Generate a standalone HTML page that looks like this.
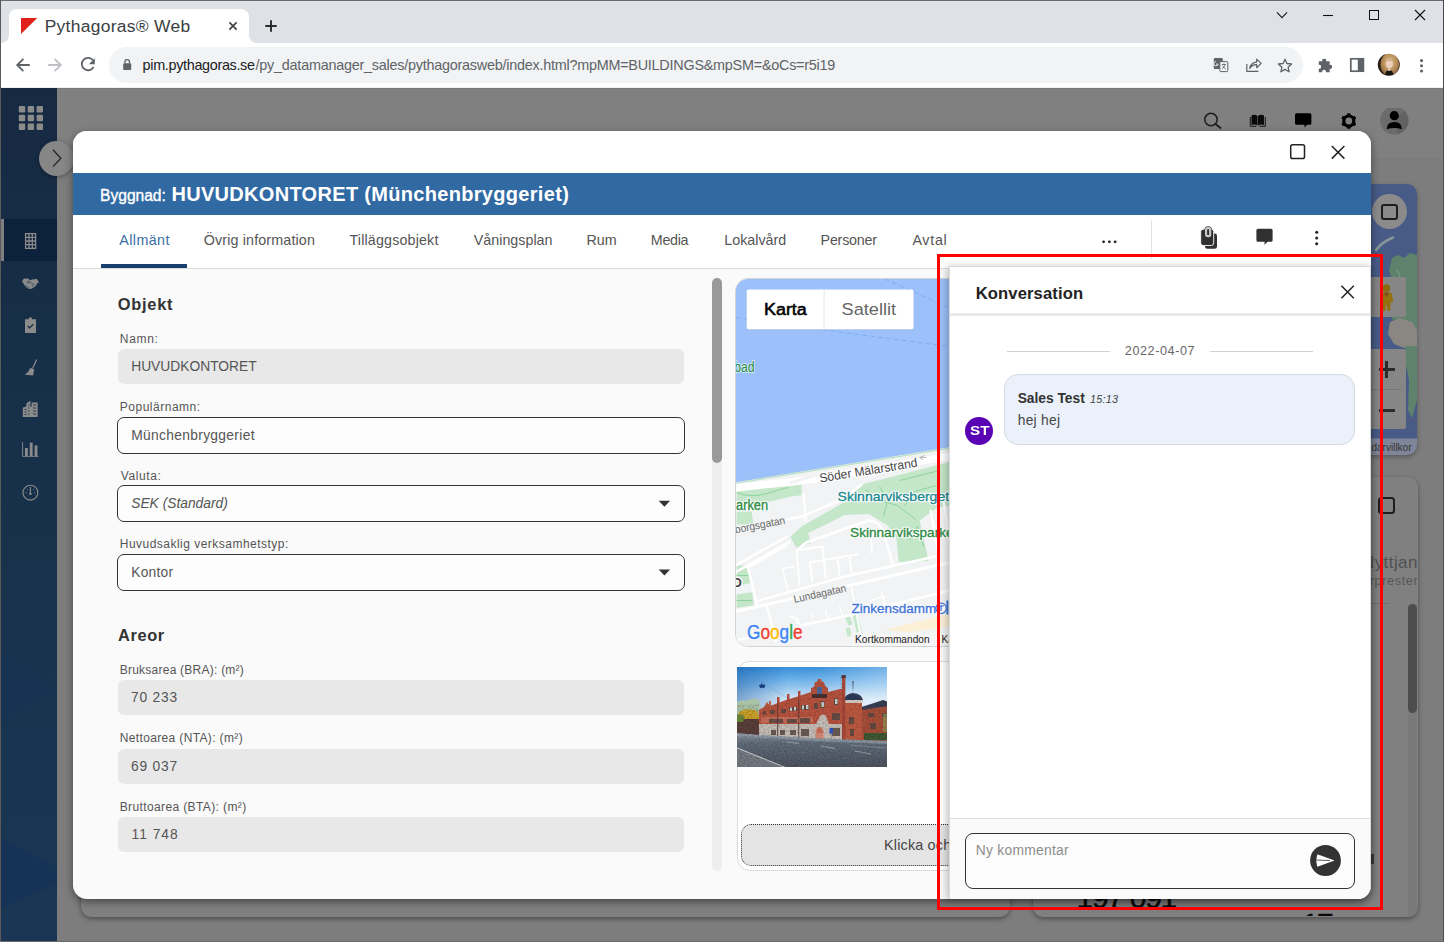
<!DOCTYPE html>
<html><head><meta charset="utf-8"><title>Pythagoras Web</title>
<style>
*{box-sizing:border-box;margin:0;padding:0}
html,body{width:1444px;height:942px;overflow:hidden;background:#7d7d7d;font-family:"Liberation Sans",sans-serif;}
#root{position:absolute;left:0;top:0;width:1444px;height:942px;overflow:hidden;background:#7d7d7d}
#root div,#root svg,#root span.t{position:absolute}
span.t{white-space:nowrap;display:block}
.gf{background:#e8e8e8;border-radius:6px;left:118px;width:566px}
.of{background:#fdfdfd;border:1px solid #333;border-radius:7px;left:117px;width:568px}
</style>

</head><body><div id="root">
<!-- behind layer -->
<div style="left:1px;top:88px;width:1442px;height:70px;background:#808080"></div>
<!-- header icons -->
<svg style="left:1200px;top:108px" width="230" height="28" viewBox="1200 108 230 28">
 <circle cx="1211" cy="119.5" r="6.2" fill="none" stroke="#1c1c1c" stroke-width="1.5"/>
 <path d="M1215.5 124 L1220.5 128" stroke="#1c1c1c" stroke-width="1.8" stroke-linecap="round"/>
 <!-- book -->
 <path d="M1251.5 115.5 q3.5 -1.5 6 0.5 v9.5 q-2.5 -1.8 -6 -0.6z M1264 115.5 q-3.500 -1.5 -6 0.5 v9.5 q2.500 -1.8 6 -0.6z" fill="#0a0a0a"/>
 <path d="M1250.3 117 v9.300 h6 M1265.300 117 v9.300 h-6" fill="none" stroke="#0a0a0a" stroke-width="0.9"/>
 <!-- chat -->
 <path d="M1296.500 113.200 h13.400 q1.500 0 1.500 1.500 v8.600 q0 1.500 -1.500 1.500 h-2.900 l-2.300 2.800 l-0.300 -2.800 h-7.900 q-1.500 0 -1.500 -1.500 v-8.600 q0 -1.500 1.500 -1.500z" fill="#000"/>
 <!-- gear -->
 <g transform="translate(1348.800 121)">
  <circle r="5" fill="none" stroke="#000" stroke-width="3.200"/>
  <g fill="#000">
   <rect x="-1.700" y="-7.800" width="3.400" height="3.200" rx="0.800"/>
   <rect x="-1.700" y="4.600" width="3.400" height="3.200" rx="0.800"/>
   <rect x="-1.700" y="-7.800" width="3.400" height="3.200" rx="0.800" transform="rotate(60)"/>
   <rect x="-1.700" y="4.600" width="3.400" height="3.200" rx="0.800" transform="rotate(60)"/>
   <rect x="-1.700" y="-7.800" width="3.400" height="3.200" rx="0.800" transform="rotate(120)"/>
   <rect x="-1.700" y="4.600" width="3.400" height="3.200" rx="0.800" transform="rotate(120)"/>
  </g>
 </g>
 <!-- avatar -->
 <circle cx="1394.300" cy="120.500" r="14.200" fill="#6c6c6c"/>
 <path d="M1394.300 120.500 L1404.500 110.700 A14.200 14.200 0 0 1 1398 134.200 Z" fill="#626262"/>
 <circle cx="1394.300" cy="115.700" r="4.600" fill="#000"/>
 <path d="M1386.800 129.200 q0 -7.200 7.500 -7.200 q7.500 0 7.500 7.200 q-7.500 -2.200 -15 0z" fill="#000"/>
</svg>
<!-- right map card -->
<div style="left:1300px;top:184px;width:117px;height:271px;border-radius:10px;background:#485b87;overflow:hidden;box-shadow:0 2px 5px rgba(0,0,0,.3)">
 <svg style="left:0;top:0" width="117" height="271" viewBox="1300 184 117 271">
  <path d="M1376 250 Q1382 242 1393 237.500" stroke="#87969a" stroke-width="2.600" fill="none" stroke-linecap="round"/>
  <path d="M1392 258 L1398 255 L1404 258 L1410 253 L1417 255 V346 H1406 L1400 330 L1392 318 L1390 300 L1394 285 L1389 270z" fill="#5e826b"/>
  <path d="M1390 322 L1400 318 L1412 322 L1417 330 V346 L1404 348 L1394 344 L1388 334z" fill="#8a8782"/>
  <path d="M1406 346 H1417 V400 L1412 418 L1408 410 L1409 380 L1405 360z" fill="#5e826b"/>
  <path d="M1396 270 q5 4 3 10 q6 2 4 8" stroke="#7c9486" stroke-width="1.200" fill="none"/>
  <path d="M1371 438.500 h46 v17 h-46z" fill="#80869a"/>
  <path d="M1392 420.500 h25" stroke="#7a4a6a" stroke-width="0.800" stroke-dasharray="3 2"/>
 </svg>
</div>
<div style="left:1371.500px;top:193.500px;width:35.500px;height:35.500px;border-radius:50%;background:#8b8b8b"></div>
<div style="left:1381px;top:203.500px;width:16.500px;height:16px;border:2px solid #1e1e1e;border-radius:3px"></div>
<div style="left:1360px;top:277.400px;width:46.300px;height:39.300px;background:#868686;border-radius:2px"></div>
<svg style="left:1377.300px;top:280.500px" width="18.800" height="33" viewBox="0 0 22 34"><circle cx="11" cy="6" r="4.500" fill="#8a6a10"/><path d="M4.500 12 q6.500 -3 13 0 l1.500 10 l-3 0.500 l-0.500 10 h-3.500 l-0.500 -7 h-1 l-0.500 7 h-3.500 l-0.500 -10 l-3 -0.500z" fill="#93710f"/><path d="M8 11.500 l3 5 l3 -5z" fill="#7a4a20"/></svg>
<div style="left:1360px;top:349.300px;width:46.300px;height:80px;background:#868686;border-radius:2px"></div>
<div style="left:1371px;top:389px;width:30px;height:1px;background:#767676"></div>
<div style="left:1378.500px;top:367.500px;width:16px;height:3.500px;background:#2c2c2c"></div>
<div style="left:1384.800px;top:361px;width:3.500px;height:16.500px;background:#2c2c2c"></div>
<div style="left:1378.500px;top:408.500px;width:16px;height:3.500px;background:#2c2c2c"></div>
<!-- bottom cards -->
<div style="left:81px;top:600px;width:929px;height:316.500px;border-radius:11px;background:#808080;box-shadow:0 2px 5px rgba(0,0,0,.38)"></div>
<div style="left:1033px;top:477px;width:384.500px;height:439.500px;border-radius:10px;background:#808080;box-shadow:0 2px 5px rgba(0,0,0,.38)"></div>
<div style="left:1368px;top:853.500px;width:6px;height:10.300px;background:#3a3a3a;border-radius:1px"></div>
<div style="left:1377.500px;top:496.500px;width:17px;height:17px;border:2px solid #1e1e1e;border-radius:3.500px"></div>
<div style="left:1371px;top:603px;width:18px;height:1px;background:#6e6e6e"></div>
<div style="left:1407.500px;top:604px;width:9.500px;height:312px;background:#797979;border-radius:5px 5px 10px 5px"></div>
<div style="left:1407.500px;top:604px;width:9.500px;height:109px;border-radius:5px;background:#4d4d4d"></div>

<div style="left:0;top:0;width:1417px;height:916px;overflow:hidden"><span class="t" style="left:1362.00px;top:551.00px;line-height:24px;font-size:17px;font-weight:normal;font-style:normal;letter-spacing:0.417px;color:#505050;">Nyttjanderätt</span>
<span class="t" style="left:1362.00px;top:572.00px;line-height:18px;font-size:12.6px;font-weight:normal;font-style:normal;letter-spacing:0.667px;color:#575757;">erprestera</span>
<span class="t" style="left:1371.50px;top:441.00px;line-height:14px;font-size:10px;font-weight:normal;font-style:normal;letter-spacing:0.000px;color:#333;">darvillkor</span>
<span class="t" style="left:1076.60px;top:877.00px;line-height:42px;font-size:30px;font-weight:normal;font-style:normal;letter-spacing:-1.300px;color:#0a0a0a;-webkit-text-stroke:0.5px #0a0a0a;">197 091</span>
<span class="t" style="left:1302.00px;top:903.00px;line-height:42px;font-size:30px;font-weight:normal;font-style:normal;letter-spacing:-1.800px;color:#0a0a0a;-webkit-text-stroke:0.5px #0a0a0a;">17</span></div>
<!-- sidebar -->
<div style="left:1px;top:88px;width:56px;height:854px;background:linear-gradient(180deg,#162a42 0%,#18324c 55%,#1a3654 100%)"></div>
<svg style="left:1px;top:600px" width="56" height="342" viewBox="1 600 56 342"><path d="M1 838 L57 868 L57 884 L1 908z" fill="#12305a" opacity="0.450"/><path d="M1 650 L57 690 L1 720z" fill="#12305a" opacity="0.250"/></svg>
<div style="left:1px;top:219px;width:56px;height:42px;background:#0c213c"></div>
<div style="left:1px;top:219px;width:3px;height:42px;background:#7f7f7f"></div>
<svg style="left:1px;top:88px" width="56" height="440" viewBox="1 88 56 440">
 <g fill="#8b8b8b">
  <rect x="18.800" y="106" width="6.400" height="6.400" rx="1.200"/><rect x="27.700" y="106" width="6.400" height="6.400" rx="1.200"/><rect x="36.600" y="106" width="6.400" height="6.400" rx="1.200"/>
  <rect x="18.800" y="114.800" width="6.400" height="6.400" rx="1.200"/><rect x="27.700" y="114.800" width="6.400" height="6.400" rx="1.200"/><rect x="36.600" y="114.800" width="6.400" height="6.400" rx="1.200"/>
  <rect x="18.800" y="123.600" width="6.400" height="6.400" rx="1.200"/><rect x="27.700" y="123.600" width="6.400" height="6.400" rx="1.200"/><rect x="36.600" y="123.600" width="6.400" height="6.400" rx="1.200"/>
 </g>
 <!-- building grid icon -->
 <g fill="none" stroke="#8b8b8b" stroke-width="1.300">
  <rect x="25.600" y="233.600" width="10" height="14.800"/>
  <path d="M29 233.600 v14.800 M32.300 233.600 v14.800 M25.600 237.300 h10 M25.600 241 h10 M25.600 244.700 h10"/>
 </g>
 <!-- handshake -->
 <path d="M22 281.600 L24.200 278 L25.600 279 L27.400 278.200 L29.200 279.600 L30.500 280.300 L32.500 279.200 L33.600 279.500 L36.200 278.800 L37.200 279.600 L39 282.400 L37.300 283.100 L36.400 285 L35 286.800 L32 288.600 L29.800 289 L27.500 288.200 L25 286 L23.600 283.600 L22.800 282.400z" fill="#8b8b8b"/>
 <path d="M29.600 281 q-2.200 -0.200 -2.400 1.400 q0.400 1.400 2 0.600 l1.600 -0.800 l4 3.400 M25.500 285 l3.500 3 M33.500 286.800 l-2 -1.600" stroke="#152a47" stroke-width="0.700" fill="none" opacity="0.850"/>
 <!-- clipboard -->
 <path d="M25 319.200 h3.400 q0.400 -2 2 -2 q1.600 0 2 2 h3.600 v13.800 h-11z" fill="#8b8b8b"/>
 <path d="M27.700 326 l1.900 1.900 l3.600 -3.700" stroke="#152a47" stroke-width="1.300" fill="none"/>
 <!-- broom -->
 <path d="M36.700 359.500 l-4.200 9" stroke="#8b8b8b" stroke-width="1.200"/>
 <path d="M30.300 367.800 l4 1.800 l-1.200 5.800 l-8.300 -0.600 q4 -2.400 5.500 -7z" fill="#8b8b8b"/>
 <!-- city -->
 <path d="M22.800 417 v-9.600 l3.600 -1 v-3.200 l4 -2.400 v6 h1.200 v-4.400 h6 v14.600z" fill="#8b8b8b"/>
 <path d="M24.500 409.500 h2 M24.500 412 h2 M24.500 414.500 h2 M28 405 h1.500 M28 408 h1.500 M28 411 h1.500 M28 414 h1.500 M33 405 h3 M33 408 h3 M33 411 h3 M33 414 h3" stroke="#152a47" stroke-width="0.800"/>
 <!-- bar chart -->
 <path d="M22.600 442 v14.400 h16" stroke="#8b8b8b" stroke-width="0.900" fill="none"/>
 <rect x="25" y="448" width="2.800" height="8" fill="#8b8b8b"/><rect x="29.800" y="442.600" width="2.800" height="13.400" fill="#8b8b8b"/><rect x="34.600" y="445.400" width="2.800" height="10.600" fill="#8b8b8b"/>
 <!-- gauge -->
 <circle cx="30.400" cy="492.700" r="7.400" fill="none" stroke="#8b8b8b" stroke-width="1.100"/>
 <path d="M30.400 487 v5.500" stroke="#8b8b8b" stroke-width="1.200"/><circle cx="30.400" cy="493.800" r="1.300" fill="#8b8b8b"/>
 <path d="M25.500 492.700 h1.200 M34.100 492.700 h1.200 M26.900 489 l0.900 0.900 M33.900 489 l-0.900 0.900" stroke="#8b8b8b" stroke-width="0.800"/>
</svg>
<!-- chevron circle -->
<div style="left:39.300px;top:140.800px;width:35px;height:35px;border-radius:50%;background:#868686;box-shadow:0 1px 4px rgba(0,0,0,.35)"></div>
<svg style="left:50px;top:147px" width="14" height="22" viewBox="0 0 14 22"><path d="M3 2.800 L10.800 11.200 L3 19.600" fill="none" stroke="#222" stroke-width="1.300"/></svg>

<!-- modal -->
<div style="left:73px;top:131px;width:1298px;height:768px;border-radius:14px;background:#fafafa;overflow:hidden;box-shadow:0 3px 9px rgba(0,0,0,.45)">
 <div style="left:0;top:0;width:1298px;height:42px;background:#fff"></div>
 <div style="left:0;top:42px;width:1298px;height:42px;background:#316aa3"></div>
 <div style="left:0;top:84px;width:1298px;height:53px;background:#fff"></div>
 <div style="left:0;top:137px;width:1298px;height:1px;background:#dcdcdc"></div>
 <div style="left:28px;top:133px;width:86px;height:4px;background:#17406f"></div>
 <div style="left:1078px;top:88.500px;width:1px;height:39px;background:#e2e2e2"></div>
</div>
<!-- modal header icons -->
<svg style="left:1280px;top:138px" width="80" height="28" viewBox="1280 138 80 28">
 <rect x="1290.700" y="144.700" width="13.800" height="13.800" rx="1.800" fill="none" stroke="#222" stroke-width="1.500"/>
 <path d="M1331.800 146 L1344.400 158.600 M1344.400 146 L1331.800 158.600" stroke="#222" stroke-width="1.500" fill="none"/>
</svg>
<svg style="left:1095px;top:220px" width="240" height="34" viewBox="1095 220 240 34">
 <circle cx="1103.600" cy="241.800" r="1.400" fill="#222"/><circle cx="1109.400" cy="241.800" r="1.400" fill="#222"/><circle cx="1115.200" cy="241.800" r="1.400" fill="#222"/>
 <!-- paperclip docs -->
 <rect x="1205" y="233.500" width="12" height="15.300" rx="2.300" fill="#303030"/>
 <rect x="1200.700" y="229.200" width="13" height="16.300" rx="2.400" fill="#303030" stroke="#fff" stroke-width="0.900"/>
 <rect x="1206.100" y="227.900" width="4.100" height="8.400" rx="2.050" fill="none" stroke="#303030" stroke-width="3.500"/>
 <rect x="1206.100" y="227.900" width="4.100" height="8.400" rx="2.050" fill="none" stroke="#fff" stroke-width="2"/>
 <rect x="1206.100" y="227.900" width="4.100" height="8.400" rx="2.050" fill="none" stroke="#666" stroke-width="0.600"/>
 <!-- chat -->
 <path d="M1258 228.700 h13 q1.600 0 1.600 1.600 v9.900 q0 1.600 -1.600 1.600 h-3.400 l-3.200 2.900 l0.300 -2.900 h-6.700 q-1.600 0 -1.600 -1.600 v-9.900 q0 -1.600 1.600 -1.600z" fill="#303030"/>
 <circle cx="1316.700" cy="232.300" r="1.500" fill="#222"/><circle cx="1316.700" cy="238" r="1.500" fill="#222"/><circle cx="1316.700" cy="243.700" r="1.500" fill="#222"/>
</svg>
<!-- fields -->
<div class="gf" style="top:349px;height:35px"></div>
<div class="of" style="top:417px;height:37px"></div>
<div class="of" style="top:485px;height:37px"></div>
<div class="of" style="top:554px;height:37px"></div>
<div class="gf" style="top:680px;height:34.500px"></div>
<div class="gf" style="top:749px;height:34.500px"></div>
<div class="gf" style="top:817px;height:35px"></div>
<svg style="left:655px;top:498px" width="18" height="82" viewBox="655 498 18 82"><path d="M658.700 500.800 h11.400 l-5.700 6z M658.700 569.500 h11.400 l-5.700 6z" fill="#333"/></svg>
<!-- scrollbar -->
<div style="left:712px;top:278px;width:10px;height:592.500px;border-radius:5px;background:#eee"></div>
<div style="left:712px;top:278px;width:10px;height:185px;border-radius:5px;background:#999"></div>
<!-- photo card -->
<div style="left:736.500px;top:661px;width:620px;height:209.500px;border-radius:13px;border:1px solid #dcdcdc;background:#fff"></div>
<div style="left:741px;top:824px;width:610px;height:42px;border-radius:10px;border:1px dotted #333;background:#e4e4e4"></div>

<span class="t" style="left:100.10px;top:185.00px;line-height:22px;font-size:15.6px;font-weight:normal;font-style:normal;letter-spacing:-0.029px;color:#fff;-webkit-text-stroke:0.35px #fff;">Byggnad:</span>
<span class="t" style="left:171.40px;top:180.00px;line-height:28px;font-size:20px;font-weight:bold;font-style:normal;letter-spacing:0.312px;color:#fff;">HUVUDKONTORET (Münchenbryggeriet)</span>
<span class="t" style="left:119.20px;top:230.00px;line-height:20px;font-size:14.3px;font-weight:normal;font-style:normal;letter-spacing:0.433px;color:#3a6ea5;">Allmänt</span>
<span class="t" style="left:203.80px;top:230.00px;line-height:20px;font-size:14.3px;font-weight:normal;font-style:normal;letter-spacing:0.137px;color:#555;">Övrig information</span>
<span class="t" style="left:349.50px;top:230.00px;line-height:20px;font-size:14.3px;font-weight:normal;font-style:normal;letter-spacing:0.154px;color:#555;">Tilläggsobjekt</span>
<span class="t" style="left:473.80px;top:230.00px;line-height:20px;font-size:14.3px;font-weight:normal;font-style:normal;letter-spacing:0.000px;color:#555;">Våningsplan</span>
<span class="t" style="left:586.40px;top:230.00px;line-height:20px;font-size:14.3px;font-weight:normal;font-style:normal;letter-spacing:0.100px;color:#555;">Rum</span>
<span class="t" style="left:650.80px;top:230.00px;line-height:20px;font-size:14.3px;font-weight:normal;font-style:normal;letter-spacing:-0.300px;color:#555;">Media</span>
<span class="t" style="left:724.30px;top:230.00px;line-height:20px;font-size:14.3px;font-weight:normal;font-style:normal;letter-spacing:0.000px;color:#555;">Lokalvård</span>
<span class="t" style="left:820.60px;top:230.00px;line-height:20px;font-size:14.3px;font-weight:normal;font-style:normal;letter-spacing:-0.229px;color:#555;">Personer</span>
<span class="t" style="left:912.40px;top:230.00px;line-height:20px;font-size:14.3px;font-weight:normal;font-style:normal;letter-spacing:0.700px;color:#555;">Avtal</span>
<span class="t" style="left:117.70px;top:293.00px;line-height:23px;font-size:16.4px;font-weight:bold;font-style:normal;letter-spacing:0.760px;color:#333;">Objekt</span>
<span class="t" style="left:118.10px;top:624.00px;line-height:23px;font-size:16.4px;font-weight:bold;font-style:normal;letter-spacing:0.600px;color:#333;">Areor</span>
<span class="t" style="left:119.80px;top:331.00px;line-height:17px;font-size:12px;font-weight:normal;font-style:normal;letter-spacing:0.700px;color:#555;">Namn:</span>
<span class="t" style="left:119.80px;top:399.00px;line-height:17px;font-size:12px;font-weight:normal;font-style:normal;letter-spacing:0.509px;color:#555;">Populärnamn:</span>
<span class="t" style="left:120.80px;top:468.00px;line-height:17px;font-size:12px;font-weight:normal;font-style:normal;letter-spacing:0.600px;color:#555;">Valuta:</span>
<span class="t" style="left:119.80px;top:536.00px;line-height:17px;font-size:12px;font-weight:normal;font-style:normal;letter-spacing:0.477px;color:#555;">Huvudsaklig verksamhetstyp:</span>
<span class="t" style="left:119.70px;top:662.00px;line-height:17px;font-size:12px;font-weight:normal;font-style:normal;letter-spacing:0.240px;color:#555;">Bruksarea (BRA): (m²)</span>
<span class="t" style="left:119.70px;top:730.00px;line-height:17px;font-size:12px;font-weight:normal;font-style:normal;letter-spacing:0.360px;color:#555;">Nettoarea (NTA): (m²)</span>
<span class="t" style="left:119.70px;top:799.00px;line-height:17px;font-size:12px;font-weight:normal;font-style:normal;letter-spacing:0.381px;color:#555;">Bruttoarea (BTA): (m²)</span>
<span class="t" style="left:131.20px;top:357.00px;line-height:19px;font-size:13.8px;font-weight:normal;font-style:normal;letter-spacing:0.000px;color:#555;">HUVUDKONTORET</span>
<span class="t" style="left:131.20px;top:426.00px;line-height:19px;font-size:13.8px;font-weight:normal;font-style:normal;letter-spacing:0.325px;color:#555;">Münchenbryggeriet</span>
<span class="t" style="left:131.20px;top:494.00px;line-height:19px;font-size:13.8px;font-weight:normal;font-style:italic;letter-spacing:0.000px;color:#555;">SEK (Standard)</span>
<span class="t" style="left:131.20px;top:563.00px;line-height:19px;font-size:13.8px;font-weight:normal;font-style:normal;letter-spacing:0.240px;color:#555;">Kontor</span>
<span class="t" style="left:130.90px;top:688.00px;line-height:19px;font-size:13.8px;font-weight:normal;font-style:normal;letter-spacing:0.840px;color:#555;">70 233</span>
<span class="t" style="left:130.90px;top:757.00px;line-height:19px;font-size:13.8px;font-weight:normal;font-style:normal;letter-spacing:0.840px;color:#555;">69 037</span>
<span class="t" style="left:131.50px;top:825.00px;line-height:19px;font-size:13.8px;font-weight:normal;font-style:normal;letter-spacing:1.000px;color:#555;">11 748</span>
<span class="t" style="left:884.00px;top:835.00px;line-height:20px;font-size:14.4px;font-weight:normal;font-style:normal;letter-spacing:0.174px;color:#444;">Klicka och dra filer hit</span>
<!-- map -->
<div style="left:735.400px;top:277.500px;width:621px;height:369px;border-radius:13px;border:1px solid #d4d4d4;background:#f1f3f4;overflow:hidden">
<svg style="left:-1px;top:-1px" width="621" height="369" viewBox="735.400 277.500 621 369" font-family="Liberation Sans, sans-serif">
 <rect x="736" y="278" width="621" height="369" fill="#f1f3f4"/>
 <!-- greens -->
 <g fill="#c4e6c9">
  <path d="M737 489.500 L791 485.700 L802 483.500 L802 494.700 L793 495.800 L768 501.400 L737 502.500z"/>
  <path d="M737 511 L752 511 L754 524 L737 524z"/>
  <path d="M790.800 536 L802 526 L845 501.400 L860 484.600 L950 461.500 L950 505 L938 507 L920 520 L929 560.500 L899 561.600 L897 538 L888 524.800 L869 513.600 L845 514.500 L831 521.400 L808.600 532.600 L810.900 542.600 L796.400 547z"/>
  <path d="M737 565 L748.400 565 L750.600 582.800 L737 585z"/>
  <path d="M737 594 L752.800 591.700 L754 605 L737 607.300z"/>
  <path d="M845 616 l5 -1 l3 9 l-4 1z M853 614 l5 -1 l4 18 l-5 1z M846 628 l4 -1 l2 8 l-4 1z"/>
 </g>
 <path d="M884.600 629.600 L950 613 L950 626 L907 632z" fill="#fbf0d6"/>
 <!-- park paths -->
 <g fill="none" stroke="#7fcf8f" stroke-width="0.800">
  <path d="M737 492 q14 6 30 1 t22 -6 M866 489 l12 10 l20 6 l18 14 M880 486 l8 14 l-4 16 M900 480 l40 -10 M905 505 l10 -14 l22 -6 M910 540 l8 -14 l6 20 M737 575 h12 M737 600 h15"/>
 </g>
 <!-- roads -->
 <g fill="none" stroke="#fff" stroke-linecap="round" stroke-linejoin="round">
  <path d="M736 529.500 L802 516 L845 498 L862 484" stroke-width="2.600"/>
  <path d="M736 565 L787.400 536 M736 571.600 L790 541" stroke-width="2.400"/>
  <path d="M804 493.500 L806 520" stroke-width="2.200"/>
  <path d="M748.400 567 L757.300 604" stroke-width="2.600"/>
  <path d="M748.400 567 L787 545" stroke-width="2.400"/>
  <path d="M736 611 L845 586 L950 562" stroke-width="3"/>
  <path d="M757.300 600.600 L845 576 L936 556" stroke-width="2.400"/>
  <path d="M767.400 606 L776.300 641" stroke-width="2.400"/>
  <path d="M790.800 616 L797.500 618.500 L799.700 625 L845 616 L950 590" stroke-width="2.400"/>
  <path d="M736 640 L770 632" stroke-width="2.400"/>
  <path d="M797 550 L823 546 L826 577 M797 550 L800 584 M810 562 L845 556 L858 554 M810 562 L813 581 M824 560 L826 577 M838 558 L840 575 M850 556 L852 572" stroke-width="2"/>
  <path d="M783 568 L788 590 M783 568 L795 566" stroke-width="1.600"/>
  <path d="M800 549 Q802 543 812 540 L869 520 Q880 520 884.600 533.700 L893.500 565" stroke-width="2.400"/>
  <path d="M862 527 Q874 534 872 552" stroke-width="2"/>
  <path d="M931 510 L940 560 M944 500 L950 540" stroke-width="2.200"/>
  <path d="M852 588 L862 640 M870 600 L886 596 M882 592 L886 606" stroke-width="1.800"/>
  <path d="M826 610 l2 8 M840 606 l3 10 M812 612 l1 6" stroke-width="1.400"/>
 </g>
 <!-- water + shore road -->
 <path d="M736 278 H1000 V438.600 L736 481.800z" fill="#9cc0f9"/>
 <path d="M736 482.800 L1000 439.600" stroke="#b9e1c0" stroke-width="1.200" fill="none"/>
 <path d="M736 487.500 L808 479.500 L845 473.500 L950 455.500" stroke="#fff" stroke-width="7.500" fill="none"/>
 <path d="M790 483 L830 470 L950 450.500" stroke="#f1f3f4" stroke-width="3" fill="none"/>
 <path d="M920 457 l5 -2 m-5 2 l3.500 2.500 M920 457 h7" stroke="#bbb" stroke-width="1" fill="none"/>
 <!-- dashed ferry lines -->
 <path d="M885 278.500 L950 307.500 M736 317 L828 330 L950 346" stroke="#7eaaf2" stroke-width="0.900" stroke-dasharray="5 3" fill="none"/>
 <!-- labels -->
 <g font-size="12.500" fill="#444" stroke="#fff" stroke-width="2.600" paint-order="stroke" stroke-linejoin="round">
  <text x="820.600" y="482" textLength="99" lengthAdjust="spacingAndGlyphs" transform="rotate(-9.300 820.600 482)">Söder Mälarstrand</text>
 </g>
 <g font-size="10.800" fill="#6b6b6b" stroke="#f1f3f4" stroke-width="2.200" paint-order="stroke" stroke-linejoin="round">
  <text x="795" y="602.500" textLength="53.500" lengthAdjust="spacingAndGlyphs" transform="rotate(-12.500 795 602.500)">Lundagatan</text>
  <text x="736" y="532.800" textLength="51" lengthAdjust="spacingAndGlyphs" transform="rotate(-11 736 532.800)">borgsgatan</text>
 </g>
 <g stroke="#fff" stroke-width="2.600" fill="#fff" stroke-linejoin="round">
  <text x="838" y="500" font-size="13.600" textLength="111.500" lengthAdjust="spacingAndGlyphs">Skinnarviksberget</text>
  <text x="850.500" y="536.600" font-size="13.600" textLength="111" lengthAdjust="spacingAndGlyphs">Skinnarviksparken</text>
  <text x="736.500" y="509.600" font-size="14" textLength="32" lengthAdjust="spacingAndGlyphs">arken</text>
  <text x="852" y="612.600" font-size="13.400" textLength="84.500" lengthAdjust="spacingAndGlyphs">Zinkensdamm</text>
 </g>
 <g stroke-width="0.350">
  <text x="838" y="500" font-size="13.600" fill="#1b8a90" stroke="#1b8a90" textLength="111.500" lengthAdjust="spacingAndGlyphs">Skinnarviksberget</text>
  <text x="850.500" y="536.600" font-size="13.600" fill="#2e8c45" stroke="#2e8c45" textLength="111" lengthAdjust="spacingAndGlyphs">Skinnarviksparken</text>
  <text x="736.500" y="509.600" font-size="14" fill="#2e8c45" stroke="#2e8c45" textLength="32" lengthAdjust="spacingAndGlyphs">arken</text>
  <text x="852" y="612.600" font-size="13.400" fill="#3f74d9" stroke="#3f74d9" textLength="84.500" lengthAdjust="spacingAndGlyphs">Zinkensdamm</text>
 </g>
 <text x="734.600" y="371" font-size="14" fill="#238a3e" stroke="#e6f0ff" stroke-width="1.600" paint-order="stroke" textLength="20.400" lengthAdjust="spacingAndGlyphs">bad</text>
 <text x="733" y="586" font-size="13" font-weight="bold" fill="#444" stroke="#fff" stroke-width="2.400" paint-order="stroke" textLength="12">D</text>
 <circle cx="941.500" cy="607.800" r="5.200" fill="#fff" stroke="#3f74d9" stroke-width="1.200"/>
 <path d="M939 605.400 h5 M941.500 605.400 v5.200" stroke="#3f74d9" stroke-width="1.200"/>
 <rect x="946.800" y="600" width="2" height="14" fill="#3f74d9"/>
 <!-- attribution strip -->
 <rect x="851" y="632.500" width="160" height="14.500" fill="#f5f5f5" fill-opacity="0.750"/>
 <text x="855.500" y="642.200" font-size="10" fill="#222" textLength="74.500" lengthAdjust="spacingAndGlyphs">Kortkommandon</text>
 <text x="942" y="642.200" font-size="10" fill="#222">Kartdata</text>
 <!-- Google -->
 <text x="747.500" y="638.500" font-size="19.600" textLength="55.500" lengthAdjust="spacingAndGlyphs" fill="#fff" stroke="#fff" stroke-width="2">Google</text>
 <text x="747.500" y="638.500" font-size="19.600" textLength="55.500" lengthAdjust="spacingAndGlyphs" stroke-width="0.450"><tspan fill="#4285f4" stroke="#4285f4">G</tspan><tspan fill="#ea4335" stroke="#ea4335">o</tspan><tspan fill="#fbbc05" stroke="#fbbc05">o</tspan><tspan fill="#4285f4" stroke="#4285f4">g</tspan><tspan fill="#34a853" stroke="#34a853">l</tspan><tspan fill="#ea4335" stroke="#ea4335">e</tspan></text>
 <!-- Karta/Satellit -->
 <rect x="747" y="289.500" width="167" height="40" rx="2" fill="#000" fill-opacity="0.180"/>
 <rect x="747" y="289" width="167" height="40" rx="2" fill="#fff"/>
 <rect x="824" y="289" width="1" height="40" fill="#e6e6e6"/>
 <text x="764.400" y="314.800" font-size="17.200" fill="#000" stroke="#000" stroke-width="0.550" textLength="42.800" lengthAdjust="spacingAndGlyphs">Karta</text>
 <text x="842" y="314.800" font-size="17.200" fill="#666" textLength="54.500" lengthAdjust="spacingAndGlyphs">Satellit</text>
</svg>
</div>

<!-- photo -->
<svg style="left:737px;top:667px" width="150" height="100" viewBox="0 0 150 100">
 <defs>
  <linearGradient id="sky" x1="0" y1="0" x2="0" y2="1"><stop offset="0" stop-color="#2f8ad9"/><stop offset="0.300" stop-color="#70b3ea"/><stop offset="0.650" stop-color="#cce3f5"/><stop offset="1" stop-color="#eef5fb"/></linearGradient>
  <linearGradient id="skyv" x1="0" y1="0" x2="1" y2="0"><stop offset="0" stop-color="#0b4f9a" stop-opacity="0.450"/><stop offset="0.350" stop-color="#0b4f9a" stop-opacity="0"/><stop offset="0.700" stop-color="#fff" stop-opacity="0.120"/><stop offset="1" stop-color="#fff" stop-opacity="0.300"/></linearGradient>
  <linearGradient id="road" x1="0" y1="0" x2="0" y2="1"><stop offset="0" stop-color="#8a95a2"/><stop offset="0.300" stop-color="#616c7a"/><stop offset="1" stop-color="#4c535e"/></linearGradient>
  <filter id="bl" x="-5%" y="-5%" width="110%" height="110%"><feGaussianBlur stdDeviation="0.700"/></filter>
  <filter id="nz" x="0" y="0" width="100%" height="100%"><feTurbulence type="fractalNoise" baseFrequency="0.550" numOctaves="2" seed="7"/><feColorMatrix type="matrix" values="0 0 0 0 0  0 0 0 0 0  0 0 0 0 0  1.600 0 0 0 -0.550"/></filter>
  <clipPath id="nzc"><path d="M0 38 L22 37 L22 43 l5 -3 l3 -5 l3 4 l26 -9 l15 -5 V21 l7 -9 h3 l7 9 v4 l12 -3 V9 h4 V30 q8 -6 17 3 V41 l9 -3 l12 -4 l6 1 V100 H0z"/></clipPath>
  <clipPath id="pc"><rect x="0" y="0" width="150" height="100"/></clipPath>
 </defs>
 <g clip-path="url(#pc)"><g filter="url(#bl)">
  <rect x="-2" y="-2" width="154" height="50" fill="url(#sky)"/>
  <rect x="-2" y="-2" width="154" height="50" fill="url(#skyv)"/>
  <!-- trees -->
  <path d="M-2 36 q6 -4 12 -2 q6 -4 12 -1 l2 8 v26 h-26z" fill="#a9c2a6"/>
  <path d="M2 45 q8 -5 18 -1 l3 8 q-10 5 -21 1z" fill="#caa12a"/>
  <path d="M-2 52 h24 v16 h-24z" fill="#5b3f3a"/>
  <path d="M-2 48 q6 -2 10 2 l-2 5 h-8z" fill="#6a8a3a"/>
  <!-- right building -->
  <path d="M122 42 l12 -3 l12 -4 l6 1 v38 h-30z" fill="#a8503a"/>
  <path d="M124 40 l10 -3 l12 -4 l6 2 v4 l-28 4z" fill="#3a3f55"/>
  <!-- main building -->
  <path d="M22 72 V43 l5 -3 l3 -5 l3 4 l8 -3 l8 -3 l10 -3 l15 -5 V21 l3 -1 l1 -5 l2 0 l1 -3 h3 l1 3 l2 0 l1 4 l3 2 v4 l12 -3 h4 V30 h2 v42z" fill="#b9543f"/>
  <path d="M22 57 h57 l4 -8 q3 -3 6 0 l3 8 h16 v15 h-86z" fill="#c7bfb8"/>
  <path d="M24 50 h52 v6 h-52z" fill="#c96f5a"/>
  <!-- tower -->
  <path d="M108 34 h17 v39 h-17z" fill="#bf5a42"/>
  <path d="M107 33 q1 -6 9 -7 q9 1 10 7z" fill="#2e3a58"/>
  <path d="M107 33 h19 v3 h-19z" fill="#d8cfc6"/>
  <path d="M116 26 l-0.600 -12 h1.200z" fill="#4a4f60"/>
  <!-- tall chimney -->
  <rect x="105" y="9" width="3.400" height="64" fill="#a9483a"/>
  <rect x="104.600" y="8" width="4.200" height="3" fill="#5a3a3a"/>
  <!-- chimneys -->
  <rect x="40" y="30" width="2.500" height="7" fill="#b04a3c"/><rect x="50" y="27" width="2.500" height="8" fill="#b04a3c"/><rect x="61" y="24" width="2.500" height="9" fill="#b04a3c"/>
  <rect x="32" y="34" width="2" height="5" fill="#c0604a"/>
  <!-- gable window & arch -->
  <path d="M80 20 h5 v9 h-5z" fill="#4a6a9a"/>
  <path d="M75 27 h15 v4 h-15z" fill="#4a3030"/>
  <path d="M78.500 72 v-9 q4 -6 8 0 v9z" fill="#d98a76"/>
  <path d="M80 62 q2.500 -4 5 0 v4 h-5z" fill="#b9543f" opacity="0.500"/>
  <!-- windows -->
  <g fill="#5a4a46" opacity="0.850">
   <rect x="26" y="44" width="3" height="4"/><rect x="33" y="43" width="5" height="4"/><rect x="44" y="42" width="5" height="4"/><rect x="52" y="40" width="8" height="4"/><rect x="64" y="38" width="8" height="5"/><rect x="77" y="36" width="4" height="6"/><rect x="83.500" y="34" width="4" height="7"/><rect x="97" y="31" width="4" height="7"/><rect x="95" y="46" width="8" height="7"/>
   <rect x="32" y="52" width="14" height="4"/><rect x="50" y="52" width="10" height="4"/><rect x="63" y="51" width="10" height="5"/>
   <rect x="34" y="63" width="5" height="5"/><rect x="43" y="63" width="5" height="5"/><rect x="53" y="63" width="6" height="5"/><rect x="64" y="62" width="8" height="7"/><rect x="95" y="61" width="8" height="8"/>
   <rect x="112" y="50" width="5" height="7"/><rect x="113" y="62" width="4" height="7"/><rect x="131" y="46" width="6" height="4"/><rect x="133" y="56" width="6" height="6"/><rect x="145" y="46" width="5" height="4"/>
  </g>
  <g fill="#c9d6d0"><rect x="53" y="40.500" width="2" height="3.500"/><rect x="57" y="40" width="2" height="3.500"/><rect x="65" y="38.500" width="2" height="4"/><rect x="69" y="38" width="2.500" height="4"/><rect x="84.500" y="35" width="2.500" height="5"/><rect x="98" y="32" width="2.500" height="5"/></g>
  <path d="M127 66 h25 v7 h-25z" fill="#3f5a34"/>
  <path d="M146 47 h6 v18 h-6z" fill="#8aa05a" opacity="0.600"/>
  <!-- poles -->
  <path d="M40.700 36 V70 M61.700 33 V71" stroke="#5a3a38" stroke-width="0.900"/>
  <rect x="92.500" y="61" width="3.400" height="5.500" fill="#2e55c8"/><path d="M94.200 66 v8" stroke="#777" stroke-width="0.600"/>
  <!-- lamp + wire -->
  <path d="M6 3 L50 31" stroke="#5f93c9" stroke-width="0.350"/>
  <path d="M22.500 18 h5.500 l-0.800 2.600 h-4z M24.800 15.500 v2.500" fill="#163a78" stroke="#163a78" stroke-width="0.700"/>
  <!-- road -->
  <path d="M-2 66 L22 68 L80 71.500 L152 74 V102 H-2z" fill="url(#road)"/>
  <path d="M-2 66 L22 68 L80 71.500 L152 74 V77 L80 74 L-2 69z" fill="#98a3ae" opacity="0.700"/>
  <path d="M-2 80 L52 102 H-2z" fill="#747a82"/>
  <path d="M-2 80 L52 102" stroke="#c8ccd0" stroke-width="1.100"/>
  <path d="M84 79 l14 2.500 M50 75 l12 1.500 M118 84 l16 3" stroke="#a8b0b8" stroke-width="1" opacity="0.800"/>
  <path d="M112 78 l38 3" stroke="#8a949e" stroke-width="0.700"/>
  <g clip-path="url(#nzc)"><rect x="0" y="8" width="150" height="92" filter="url(#nz)" opacity="0.260"/></g>
 </g></g>
</svg>

<!-- conversation panel -->
<div style="left:949px;top:265.500px;width:421.500px;height:633.500px;background:#fff;border:1px solid #dadada;border-bottom:none;border-radius:0 0 13px 0;box-shadow:-1.500px 1.500px 8px rgba(0,0,0,.26);overflow:hidden">
 <div style="left:0;top:46.500px;width:421px;height:3px;background:#e9e9e9"></div>
 <div style="left:0;top:551.500px;width:421px;height:1px;background:#dcdcdc"></div>
 <div style="left:0;top:552.500px;width:421px;height:82px;background:#fafafa"></div>
</div>
<svg style="left:1335px;top:280px" width="26" height="24" viewBox="1335 280 26 24"><path d="M1341.400 285.800 L1353.800 298.200 M1353.800 285.800 L1341.400 298.200" stroke="#222" stroke-width="1.500" fill="none"/></svg>
<div style="left:1007px;top:351px;width:103px;height:1px;background:#d0d0d0"></div>
<div style="left:1210px;top:351px;width:103px;height:1px;background:#d0d0d0"></div>
<div style="left:1004px;top:374px;width:351px;height:70.500px;border-radius:14px;background:#eaf1fa;border:1px solid #d6dbe2"></div>
<div style="left:964.800px;top:416.700px;width:28px;height:28px;border-radius:50%;background:#5a03b4"></div>
<div style="left:965px;top:833px;width:390px;height:56px;border-radius:8px;background:#fdfdfd;border:1px solid #333"></div>
<svg style="left:1308px;top:843px" width="36" height="36" viewBox="1308 843 36 36">
 <circle cx="1325.500" cy="860.500" r="15.400" fill="#333"/>
 <path d="M1317.400 854.200 L1334.600 860.500 L1317.400 866.800 Q1315.400 860.500 1317.400 854.200z" fill="#fff"/>
 <path d="M1316.600 860.100 L1330 860.500" stroke="#333" stroke-width="0.800"/>
</svg>

<span class="t" style="left:975.70px;top:282.00px;line-height:23px;font-size:16.6px;font-weight:bold;font-style:normal;letter-spacing:0.127px;color:#222;">Konversation</span>
<span class="t" style="left:1124.80px;top:342.00px;line-height:18px;font-size:12.6px;font-weight:normal;font-style:normal;letter-spacing:0.600px;color:#666;">2022-04-07</span>
<span class="t" style="left:1017.70px;top:389.00px;line-height:19px;font-size:13.8px;font-weight:bold;font-style:normal;letter-spacing:-0.022px;color:#333;">Sales Test</span>
<span class="t" style="left:1090.00px;top:392.00px;line-height:15px;font-size:10.8px;font-weight:normal;font-style:italic;letter-spacing:0.250px;color:#444;">15:13</span>
<span class="t" style="left:1017.70px;top:411.00px;line-height:19px;font-size:13.8px;font-weight:normal;font-style:normal;letter-spacing:0.267px;color:#444;">hej hej</span>
<span class="t" style="left:969.50px;top:421.00px;line-height:19px;font-size:13.5px;font-weight:bold;font-style:normal;letter-spacing:0.000px;color:#fff;transform:scaleX(1.13);transform-origin:0 50%;">ST</span>
<span class="t" style="left:975.70px;top:841.00px;line-height:19px;font-size:13.8px;font-weight:normal;font-style:normal;letter-spacing:0.291px;color:#8c8c8c;">Ny kommentar</span>
<div style="left:937px;top:254px;width:446px;height:656px;border:3px solid #fe0000"></div>

<!-- browser chrome -->
<div style="left:0;top:0;width:1444px;height:43px;background:#dee1e6"></div>
<div style="left:1px;top:35px;width:256px;height:8px;background:#fff"></div>
<div style="left:1px;top:27px;width:8px;height:16px;background:#dee1e6;border-radius:0 0 8px 0"></div>
<div style="left:249px;top:27px;width:8px;height:16px;background:#dee1e6;border-radius:0 0 0 8px"></div>
<div style="left:9px;top:9px;width:240px;height:34px;background:#fff;border-radius:8px 8px 0 0"></div>
<div style="left:0;top:43px;width:1444px;height:44px;background:#fff"></div>
<div style="left:0;top:87px;width:1444px;height:1px;background:#efefef"></div>
<div style="left:0;top:88px;width:1444px;height:1px;background:rgba(0,0,0,.06)"></div>
<div style="left:109px;top:47px;width:1193.500px;height:36px;border-radius:18px;background:#f1f3f4"></div>
<svg style="left:0;top:0" width="1444" height="88" viewBox="0 0 1444 88">
 <path d="M21 18 H37.200 L21 34z" fill="#e1201a"/>
 <path d="M229.400 22.400 L236.600 29.600 M236.600 22.400 L229.400 29.600" stroke="#3c4043" stroke-width="1.600"/>
 <path d="M265.300 26 H276.700 M271 20.300 V31.700" stroke="#2a2a2a" stroke-width="1.900"/>
 <!-- window controls -->
 <path d="M1277 12.300 L1282 17.600 L1287 12.300" fill="none" stroke="#1a1a1a" stroke-width="1.100"/>
 <path d="M1323 15.500 H1333" stroke="#111" stroke-width="1.100"/>
 <rect x="1369.500" y="10.500" width="9" height="9" fill="none" stroke="#111" stroke-width="1"/>
 <path d="M1415 10 L1425 20 M1425 10 L1415 20" stroke="#111" stroke-width="1.100"/>
 <!-- nav -->
 <g fill="none" stroke="#5f6368" stroke-width="1.800">
  <path d="M29.800 65 H17.500 M23.400 58.800 L17.200 65 L23.400 71.200"/>
  <path d="M93 60.300 A6.200 6.200 0 1 0 93.600 66.800"/>
 </g>
 <path d="M94.800 58.300 V64.300 H88.800z" fill="#5f6368"/>
 <g fill="none" stroke="#bcc0c4" stroke-width="1.800"><path d="M48.200 65 H60.500 M54.600 58.800 L60.800 65 L54.600 71.200"/></g>
 <!-- lock -->
 <rect x="123.200" y="63.200" width="8" height="6.800" rx="1" fill="#5f6368"/>
 <path d="M124.900 63.500 v-1.600 a2.300 2.300 0 0 1 4.600 0 v1.600" fill="none" stroke="#5f6368" stroke-width="1.300"/>
 <!-- translate -->
 <rect x="1213.800" y="58" width="9" height="11" rx="1" fill="#5f6368"/>
 <rect x="1219.800" y="61.600" width="8" height="10" rx="1" fill="#f1f3f4" stroke="#5f6368" stroke-width="1"/>
 <path d="M1216 61.500 a2.200 2.200 0 1 0 2.200 2.600 h-2.200" stroke="#f1f3f4" stroke-width="0.900" fill="none"/>
 <path d="M1221.800 64.500 h4.200 M1223.900 63.600 v0.900 M1225.200 64.500 q-0.600 2.600 -3.200 4.400 M1222.600 65.600 q0.800 2 3.200 3.400" stroke="#5f6368" stroke-width="0.800" fill="none"/>
 <!-- share -->
 <path d="M1246.800 64 V71.300 H1258.400" fill="none" stroke="#5f6368" stroke-width="1.200"/>
 <path d="M1249.700 68.500 q1 -6 7 -6.400 v-3 l4.500 4.300 l-4.500 4.300 v-3 q-4.500 -0.200 -7 3.800z" fill="none" stroke="#5f6368" stroke-width="1.200" stroke-linejoin="round"/>
 <!-- star -->
 <path d="M1285 59.200 l1.900 4.300 l4.700 0.500 l-3.500 3.200 l1 4.600 l-4.100 -2.400 l-4.100 2.400 l1 -4.600 l-3.500 -3.200 l4.700 -0.500z" fill="none" stroke="#5f6368" stroke-width="1.300" stroke-linejoin="round"/>
 <!-- puzzle -->
 <path d="M1318.800 61.300 h3.500 a2 2 0 1 1 3.900 0 h3.500 v3.600 a2 2 0 1 1 0 3.900 v3.400 h-3.800 a1.900 1.900 0 1 0 -3.600 0 h-3.500 v-3.600 a1.900 1.900 0 1 0 0 -3.700z" fill="#5f6368"/>
 <!-- side panel -->
 <rect x="1350.800" y="58.800" width="12.600" height="12.400" fill="none" stroke="#5f6368" stroke-width="1.700"/>
 <rect x="1357.800" y="58.800" width="5.600" height="12.400" fill="#5f6368"/>
 <!-- avatar -->
 <defs><clipPath id="avc"><circle cx="1388.800" cy="64.800" r="11"/></clipPath>
 <radialGradient id="hair" cx="0.500" cy="0.400" r="0.650"><stop offset="0" stop-color="#d9b98a"/><stop offset="0.550" stop-color="#b98f5a"/><stop offset="1" stop-color="#7a5a34"/></radialGradient>
 <filter id="avb" x="-10%" y="-10%" width="120%" height="120%"><feGaussianBlur stdDeviation="0.600"/></filter></defs>
 <g clip-path="url(#avc)"><g filter="url(#avb)">
  <rect x="1377" y="53" width="24" height="24" fill="#2a1d16"/>
  <ellipse cx="1389.800" cy="64.500" rx="9.400" ry="11.500" fill="url(#hair)"/>
  <ellipse cx="1389.300" cy="63.600" rx="3.700" ry="4.900" fill="#ecd0bb"/>
  <path d="M1385.600 62 q3.800 -5.500 7.600 0 q-3.600 -2.600 -7.600 0z" fill="#c9a070"/>
  <path d="M1384.500 76.500 q1 -6 4.800 -7 q3.800 1 4.800 7z" fill="#17120f"/>
  <ellipse cx="1389.300" cy="69.600" rx="1.700" ry="1.500" fill="#e0bda3"/>
 </g></g>
 <circle cx="1421.500" cy="60.600" r="1.550" fill="#5f6368"/><circle cx="1421.500" cy="65.800" r="1.550" fill="#5f6368"/><circle cx="1421.500" cy="71" r="1.550" fill="#5f6368"/>
</svg>
<!-- window frame -->
<div style="left:0;top:0;width:1444px;height:1px;background:#6a6a6a"></div>
<div style="left:0;top:0;width:1px;height:942px;background:#5a5a5a"></div>
<div style="left:1443px;top:0;width:1px;height:942px;background:#4a4a4a"></div>
<div style="left:0;top:941px;width:1444px;height:1px;background:#6a6a6a"></div>

<span class="t" style="left:44.70px;top:14.00px;line-height:24px;font-size:17.4px;font-weight:normal;font-style:normal;letter-spacing:0.314px;color:#3a3d41;">Pythagoras® Web</span>
<span class="t" style="left:142.60px;top:55.00px;line-height:20px;font-size:14.4px;font-weight:normal;font-style:normal;letter-spacing:-0.325px;color:#202124;">pim.pythagoras.se</span>
<span class="t" style="left:255.60px;top:55.00px;line-height:20px;font-size:14.4px;font-weight:normal;font-style:normal;letter-spacing:-0.239px;color:#5f6368;">/py_datamanager_sales/pythagorasweb/index.html?mpMM=BUILDINGS&amp;mpSM=&amp;oCs=r5i19</span>
</div></body></html>
